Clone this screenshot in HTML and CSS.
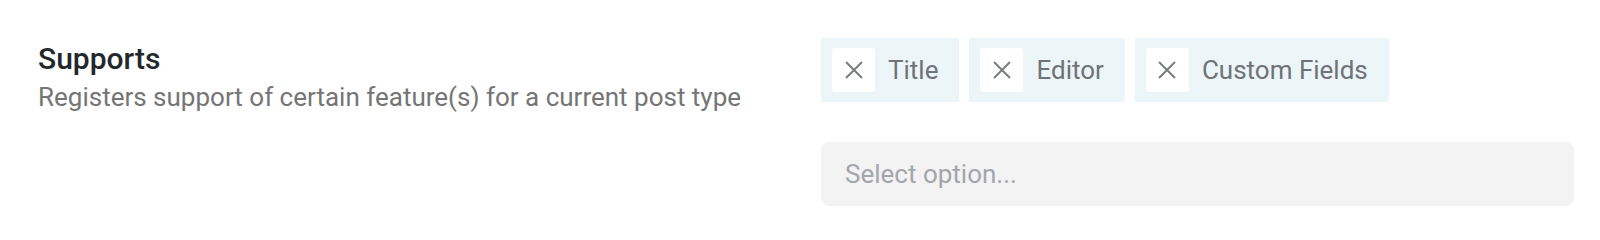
FILE: index.html
```html
<!DOCTYPE html>
<html>
<head>
<meta charset="utf-8">
<link rel="stylesheet" href="styles.css">
</head>
<body>
<div class="field">
  <div class="label">
    <div class="title">Supports</div>
    <div class="desc">Registers support of certain feature(s) for a current post type</div>
  </div>
  <div class="control">
    <div class="tags">
      <div class="tag">
        <span class="remove"><svg width="20" height="20" viewBox="0 0 20 20"><path d="M2 2 L18 18 M18 2 L2 18" stroke="#7a7d80" stroke-width="2" fill="none"/></svg></span>
        <span class="tag-text">Title</span>
      </div>
      <div class="tag">
        <span class="remove"><svg width="20" height="20" viewBox="0 0 20 20"><path d="M2 2 L18 18 M18 2 L2 18" stroke="#7a7d80" stroke-width="2" fill="none"/></svg></span>
        <span class="tag-text">Editor</span>
      </div>
      <div class="tag">
        <span class="remove"><svg width="20" height="20" viewBox="0 0 20 20"><path d="M2 2 L18 18 M18 2 L2 18" stroke="#7a7d80" stroke-width="2" fill="none"/></svg></span>
        <span class="tag-text">Custom Fields</span>
      </div>
    </div>
    <div class="select">Select option...</div>
  </div>
</div>
</body>
</html>
```
FILE: styles.css
```css
html, body {
  margin: 0;
  padding: 0;
  background: #ffffff;
  font-family: Roboto, "Liberation Sans", sans-serif;
}
.field {
  display: flex;
  padding: 38px 26px 0 38px;
}
.label {
  width: 783px;
  padding-top: 4px;
}
.title {
  font-size: 30px;
  font-weight: 500;
  color: #23282d;
  line-height: 34px;
}
.desc {
  margin-top: 4px;
  font-size: 26px;
  color: #757575;
  line-height: 34px;
}
.control {
  flex: 1;
  display: flex;
  flex-direction: column;
  gap: 40px;
}
.tags {
  display: flex;
  gap: 10px;
}
.tag {
  display: flex;
  align-items: center;
  background: #ecf5f8;
  padding: 10px 21px 10px 11px;
  height: 44px;
}
.remove {
  width: 43px;
  height: 44px;
  background: #ffffff;
  border-radius: 3px;
  display: flex;
  align-items: center;
  justify-content: center;
  margin-right: 13px;
}
.tag-text {
  font-size: 26px;
  color: #6f7378;
}
.select {
  height: 64px;
  background: #f3f3f3;
  border-radius: 8px;
  display: flex;
  align-items: center;
  padding-left: 24px;
  font-size: 26px;
  color: #a3a6aa;
}
```
